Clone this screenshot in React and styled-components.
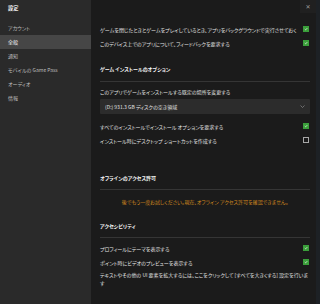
import React from "react";
import styled, { createGlobalStyle } from "styled-components";

const GlobalStyle = createGlobalStyle`
  html, body {
    margin: 0;
    padding: 0;
    background: #1b1b1b;
  }
  body {
    font-family: "Noto Sans CJK JP", "Noto Sans", sans-serif;
    font-feature-settings: "palt";
  }
`;

const Window = styled.div`
  display: flex;
  width: 320px;
  height: 304px;
  overflow: hidden;
`;

const Sidebar = styled.nav`
  width: 91px;
  flex-shrink: 0;
  background: #2a2a2a;
  display: flex;
  flex-direction: column;
`;

const SideTitle = styled.div`
  height: 16px;
  line-height: 16px;
  padding-left: 8px;
  margin-bottom: 5px;
  font-size: 5.2px;
  font-weight: 700;
  color: #f0f0f0;
`;

const SideItem = styled.div`
  height: 14px;
  line-height: 14px;
  padding-left: 8px;
  font-size: 5px;
  color: ${(p) => (p.$active ? "#f4f4f4" : "#bdbdbd")};
  background: ${(p) => (p.$active ? "#464646" : "transparent")};
`;

const Main = styled.main`
  position: relative;
  flex: 1;
  background: #1b1b1b;
  padding: 22px 6px 0 9px;
  display: flex;
  flex-direction: column;
`;

const EdgeStrip = styled.div`
  width: 4px;
  flex-shrink: 0;
  background: #1d2125;
`;

const CloseButton = styled.div`
  position: absolute;
  top: 0;
  right: 0;
  width: 16px;
  height: 13px;
  background: #202020;
  display: flex;
  align-items: center;
  justify-content: center;
  color: #9a9a9a;
  font-size: 6px;
  font-family: "DejaVu Sans", sans-serif;
`;

const Row = styled.div`
  display: flex;
  align-items: center;
  justify-content: space-between;
  height: 14px;
  margin-top: ${(p) => p.$mt || 0}px;
  font-size: 5px;
  color: #e2e2e2;
`;

const Box = styled.span`
  width: 6px;
  height: 6px;
  box-sizing: border-box;
  flex-shrink: 0;
  margin-right: 1px;
  display: flex;
  align-items: center;
  justify-content: center;
  background: ${(p) => (p.$checked ? "#3a9e3a" : "transparent")};
  border: ${(p) => (p.$checked ? "none" : "1px solid #a8a8a8")};
`;

const SectionHeader = styled.div`
  height: 14px;
  line-height: 14px;
  margin-top: ${(p) => p.$mt}px;
  font-size: 5px;
  font-weight: 700;
  color: #f4f4f4;
`;

const Divider = styled.div`
  height: 1px;
  background: #353535;
  margin-top: ${(p) => p.$mt}px;
`;

const Label = styled.div`
  height: 12px;
  line-height: 12px;
  margin-top: 4px;
  font-size: 5px;
  color: #e2e2e2;
`;

const Select = styled.div`
  height: 15px;
  margin-top: 1px;
  background: #2c2c2c;
  border-radius: 1px;
  display: flex;
  align-items: center;
  justify-content: space-between;
  padding: 0 5px 0 5px;
  font-size: 5px;
  color: #e6e6e6;
`;

const Warning = styled.div`
  height: 14px;
  line-height: 14px;
  margin-top: 5px;
  text-align: center;
  font-size: 5px;
  color: #d48a1e;
`;

const Paragraph = styled.div`
  margin-top: 2px;
  padding-right: 1px;
  line-height: 8px;
  font-size: 5px;
  color: #e2e2e2;
`;

const Check = ({ checked }) => (
  <Box $checked={checked}>
    {checked && (
      <svg width="4" height="4" viewBox="0 0 8 8">
        <path d="M1.5 4.2 L3.2 5.8 L6.6 2.2" fill="none" stroke="#ffffff" strokeWidth="1.3" />
      </svg>
    )}
  </Box>
);

const Chevron = () => (
  <svg width="5" height="3" viewBox="0 0 10 6">
    <path d="M1 1 L5 5 L9 1" fill="none" stroke="#9a9a9a" strokeWidth="1.2" />
  </svg>
);

const navItems = ["アカウント", "全般", "通知", "モバイルの Game Pass", "オーディオ", "情報"];

export default function App() {
  return (
    <Window>
      <GlobalStyle />
      <Sidebar>
        <SideTitle>設定</SideTitle>
        {navItems.map((item) => (
          <SideItem key={item} $active={item === "全般"}>
            {item}
          </SideItem>
        ))}
      </Sidebar>
      <Main>
        <CloseButton>✕</CloseButton>
        <Row>
          ゲームを閉じたときとゲームをプレイしているとき、アプリをバックグラウンドで実行させておく
          <Check checked />
        </Row>
        <Row>
          このデバイス上でのアプリについて、フィードバックを要求する
          <Check checked />
        </Row>

        <SectionHeader $mt={12}>ゲーム インストールのオプション</SectionHeader>
        <Divider $mt={5} />
        <Label>このアプリでゲームをインストールする既定の場所を変更する</Label>
        <Select>
          (D:) 931.3 GB ディスクの空き領域
          <Chevron />
        </Select>
        <Row $mt={5}>
          すべてのインストールでインストール オプションを要求する
          <Check checked />
        </Row>
        <Row>
          インストール時にデスクトップ ショートカットを作成する
          <Check />
        </Row>

        <SectionHeader $mt={24}>オフラインのアクセス許可</SectionHeader>
        <Divider $mt={4} />
        <Warning>後でもう一度お試しください。現在、オフライン アクセス許可を確認できません。</Warning>

        <SectionHeader $mt={10}>アクセシビリティ</SectionHeader>
        <Divider $mt={4} />
        <Row $mt={3}>
          プロフィールにテーマを表示する
          <Check checked />
        </Row>
        <Row>
          ポイント時にビデオのプレビューを表示する
          <Check checked />
        </Row>
        <Paragraph>
          テキストやその他の UI 要素を拡大するには、ここをクリックして [すべてを大きくする] 設定を行います
        </Paragraph>
      </Main>
      <EdgeStrip />
    </Window>
  );
}
